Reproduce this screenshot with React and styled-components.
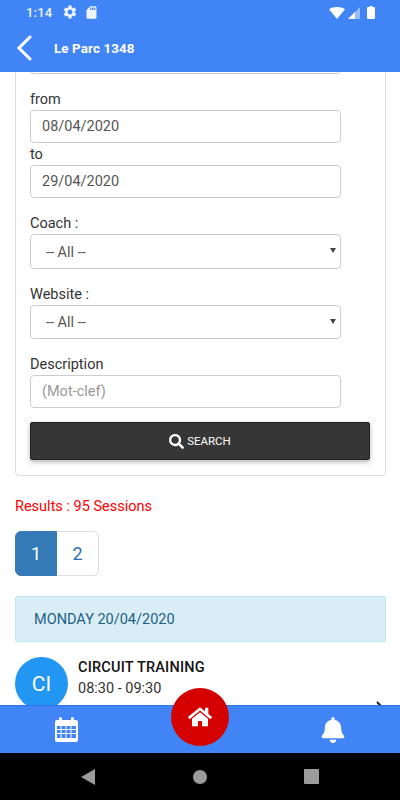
import React from 'react';
import styled, { createGlobalStyle } from 'styled-components';
import { FaBell, FaHome, FaSearch } from 'react-icons/fa';
import { MdSettings, MdSdCard } from 'react-icons/md';

const GlobalStyle = createGlobalStyle`
    html, body {
        margin: 0;
        padding: 0;
        background: #fff;
    }
    * {
        box-sizing: border-box;
    }
`;

const Screen = styled.div`
    position: relative;
    width: 400px;
    height: 800px;
    display: flex;
    flex-direction: column;
    overflow: hidden;
    font-family: Roboto, "Liberation Sans", sans-serif;
    color: #333;
`;

const Header = styled.header`
    flex: none;
    height: 72px;
    background: #4184f5;
    color: #fff;
`;

const StatusBar = styled.div`
    height: 24px;
    padding: 0 25px 0 26px;
    display: flex;
    align-items: center;
    font-size: 13px;
    font-weight: 500;
    color: #eef4fe;
`;

const StatusTime = styled.span`
    width: 36px;
    letter-spacing: 0.2px;
`;

const SdIcon = styled(MdSdCard)`
    margin-left: 6px;
`;

const StatusRight = styled.div`
    margin-left: auto;
    display: flex;
    align-items: flex-end;
    gap: 3px;
`;

const Battery = styled.svg`
    margin-left: 4px;
`;

const Toolbar = styled.div`
    height: 48px;
    display: flex;
    align-items: center;
    padding-left: 16px;
`;

const BackLink = styled.div`
    width: 38px;
    height: 26px;
`;

const Title = styled.div`
    font-size: 13.4px;
    font-weight: 700;
    letter-spacing: 0.1px;
`;

const Main = styled.main`
    flex: 1;
    min-height: 0;
    overflow: hidden;
    padding: 0 14px 0 15px;
`;

const FilterCard = styled.section`
    margin-top: -32px;
    height: 436px;
    padding: 0 14px;
    border: 1px solid #ddd;
    border-radius: 4px;
`;

const Field = styled.div`
    width: 311px;
    margin-bottom: ${(p) => p.$gap || 0}px;
`;

const Label = styled.label`
    display: block;
    height: ${(p) => p.$height || 21}px;
    line-height: ${(p) => p.$height || 21}px;
    font-size: 14.5px;
    color: #333;
`;

const TextInput = styled.input`
    display: block;
    width: 100%;
    height: 33px;
    padding: 0 11px;
    border: 1px solid #ccc;
    border-radius: 4px;
    background: #fff;
    outline: none;
    font: 400 14.5px Roboto, sans-serif;
    color: #555;
    &::placeholder {
        color: #999;
        opacity: 1;
    }
`;

const SelectBox = styled.div`
    position: relative;
    height: ${(p) => p.$height}px;
`;

const Select = styled.select`
    display: block;
    width: 100%;
    height: 100%;
    padding: 1px 15px 0;
    border: 1px solid #ccc;
    border-radius: 4px;
    background: #fff;
    outline: none;
    appearance: none;
    font: 400 14.5px Roboto, sans-serif;
    color: #555;
`;

const Caret = styled.span`
    position: absolute;
    right: 5px;
    top: 14px;
    width: 0;
    height: 0;
    border-left: 3px solid transparent;
    border-right: 3px solid transparent;
    border-top: 5px solid #444;
`;

const SearchButton = styled.button`
    width: 340px;
    height: 38px;
    margin-top: 14px;
    padding-bottom: 1px;
    display: flex;
    align-items: center;
    justify-content: center;
    gap: 3px;
    border: 1px solid #222;
    border-radius: 2px;
    background: #363636;
    box-shadow: 0 2px 5px rgba(0, 0, 0, 0.3);
    color: #fff;
    font: 400 11.5px Roboto, sans-serif;
    text-transform: uppercase;
`;

const Results = styled.p`
    margin: 21px 0 0;
    height: 20px;
    line-height: 20px;
    font-size: 14.5px;
    color: #f00;
`;

const Pagination = styled.div`
    display: flex;
    margin-top: 14px;
`;

const PageLink = styled.span`
    width: 42px;
    height: 45px;
    display: flex;
    align-items: center;
    justify-content: center;
    font-size: 18px;
    border: 1px solid ${(p) => (p.$active ? '#337ab7' : '#ddd')};
    border-left-width: ${(p) => (p.$active ? 1 : 0)}px;
    border-radius: ${(p) => (p.$active ? '6px 0 0 6px' : '0 6px 6px 0')};
    background: ${(p) => (p.$active ? '#337ab7' : '#fff')};
    color: ${(p) => (p.$active ? '#fff' : '#2a6db3')};
`;

const DayBanner = styled.div`
    height: 46px;
    margin-top: 20px;
    padding: 0 18px;
    display: flex;
    align-items: center;
    border: 1px solid #bce8f1;
    border-radius: 2px;
    background: #d9edf7;
    color: #1f5f85;
    font-size: 14.5px;
`;

const Session = styled.div`
    position: relative;
    display: flex;
    gap: 10px;
    margin-top: 15px;
`;

const Avatar = styled.div`
    flex: none;
    width: 53px;
    height: 53px;
    border-radius: 50%;
    background: #2196f3;
    color: #fff;
    display: flex;
    align-items: center;
    justify-content: center;
    font-size: 21px;
`;

const SessionBody = styled.div`
    flex: 1;
    padding-top: 1px;
`;

const SessionTitle = styled.div`
    height: 20px;
    line-height: 20px;
    font-size: 14.5px;
    font-weight: 500;
    letter-spacing: 0.2px;
    color: #111;
`;

const SessionTime = styled.div`
    height: 22px;
    line-height: 22px;
    font-size: 14.5px;
    color: #333;
`;

const Chevron = styled.svg`
    position: absolute;
    right: 2px;
    top: 44px;
`;

const TabBar = styled.nav`
    flex: none;
    height: 48px;
    position: relative;
    display: flex;
    justify-content: space-between;
    align-items: center;
    padding: 0 54px 0 55px;
    background: #4184f5;
    border-top: 1px solid #2b73ee;
    color: #fff;
`;

const HomeButton = styled.div`
    position: absolute;
    left: 171px;
    top: -18px;
    width: 58px;
    height: 58px;
    border-radius: 50%;
    background: #d50000;
    display: flex;
    align-items: center;
    justify-content: center;
    color: #fff;
`;

const NavBar = styled.div`
    flex: none;
    height: 47px;
    background: #000;
    display: flex;
    align-items: center;
    gap: 97px;
    padding-left: 81px;
`;

const CalendarIcon = () => (
    <svg width="23" height="25" viewBox="0 0 23 25">
        <path
            fill="#fff"
            fillRule="evenodd"
            d="M2 3h2V1.500a1.500 1.500 0 0 1 3 0V3h9V1.500a1.500 1.500 0 0 1 3 0V3h2a2 2 0 0 1 2 2v18a2 2 0 0 1-2 2H2a2 2 0 0 1-2-2V5a2 2 0 0 1 2-2zM2 9v3h3.500V9zM6.500 9v3h4V9zM11.500 9v3h4V9zM16.500 9v3H21V9zM2 13v3h3.500v-3zM6.500 13v3h4v-3zM11.500 13v3h4v-3zM16.500 13v3H21v-3zM2 17v3.500a.5.5 0 0 0 .5.5h3v-4zM6.500 17v4h4v-4zM11.500 17v4h4v-4zM16.500 17v4h4a.5.5 0 0 0 .5-.5V17z"
        />
    </svg>
);

const App = () => {
    return (
        <>
            <GlobalStyle />
            <Screen>
                <Header>
                    <StatusBar>
                        <StatusTime>1:14</StatusTime>
                        <MdSettings size={16} />
                        <SdIcon size={15} />
                        <StatusRight>
                            <svg width="16" height="12" viewBox="0 0 16 12">
                                <path fill="#fff" d="M0 2.200C2.200.8 5 0 8 0s5.800.8 8 2.200L8 12z" />
                            </svg>
                            <svg width="12" height="12" viewBox="0 0 12 12">
                                <path fill="#fff" fillOpacity="0.45" d="M12 0v12H0z" />
                                <path fill="#fff" d="M7 5v7H0z" />
                            </svg>
                            <Battery width="8" height="13" viewBox="0 0 8 13">
                                <path fill="#fff" d="M2.500 0h3v1H7a1 1 0 0 1 1 1v10a1 1 0 0 1-1 1H1a1 1 0 0 1-1-1V2a1 1 0 0 1 1-1h1.500z" />
                            </Battery>
                        </StatusRight>
                    </StatusBar>
                    <Toolbar>
                        <BackLink>
                            <svg width="16" height="26" viewBox="0 0 16 26">
                                <path d="M14 2 3 13l11 11" fill="none" stroke="#fff" strokeWidth="3" strokeLinecap="round" />
                            </svg>
                        </BackLink>
                        <Title>Le Parc 1348</Title>
                    </Toolbar>
                </Header>

                <Main>
                    <FilterCard>
                        <Field $gap={16}>
                            <TextInput readOnly />
                        </Field>
                        <Field $gap={1}>
                            <Label $height={20}>from</Label>
                            <TextInput readOnly value="08/04/2020" />
                        </Field>
                        <Field $gap={15}>
                            <Label>to</Label>
                            <TextInput readOnly value="29/04/2020" />
                        </Field>
                        <Field $gap={15}>
                            <Label>Coach :</Label>
                            <SelectBox $height={35}>
                                <Select defaultValue="all">
                                    <option value="all">-- All --</option>
                                </Select>
                                <Caret />
                            </SelectBox>
                        </Field>
                        <Field $gap={15}>
                            <Label>Website :</Label>
                            <SelectBox $height={34}>
                                <Select defaultValue="all">
                                    <option value="all">-- All --</option>
                                </Select>
                                <Caret />
                            </SelectBox>
                        </Field>
                        <Field>
                            <Label>Description</Label>
                            <TextInput readOnly placeholder="(Mot-clef)" />
                        </Field>
                        <SearchButton>
                            <FaSearch size={15} />
                            Search
                        </SearchButton>
                    </FilterCard>

                    <Results>Results : 95 Sessions</Results>

                    <Pagination>
                        <PageLink $active>1</PageLink>
                        <PageLink>2</PageLink>
                    </Pagination>

                    <DayBanner>MONDAY 20/04/2020</DayBanner>

                    <Session>
                        <Avatar>CI</Avatar>
                        <SessionBody>
                            <SessionTitle>CIRCUIT TRAINING</SessionTitle>
                            <SessionTime>08:30 - 09:30</SessionTime>
                        </SessionBody>
                        <Chevron width="8" height="14" viewBox="0 0 8 14">
                            <path d="M1 1l6 6-6 6" fill="none" stroke="#222" strokeWidth="2" />
                        </Chevron>
                    </Session>
                </Main>

                <TabBar>
                    <CalendarIcon />
                    <HomeButton>
                        <FaHome size={24} />
                    </HomeButton>
                    <FaBell size={26} />
                </TabBar>

                <NavBar>
                    <svg width="15" height="16" viewBox="0 0 15 16">
                        <path fill="#9b9b9b" d="M14 0v16L0 8z" />
                    </svg>
                    <svg width="14" height="14" viewBox="0 0 14 14">
                        <circle cx="7" cy="7" r="7" fill="#9b9b9b" />
                    </svg>
                    <svg width="15" height="15" viewBox="0 0 15 15">
                        <rect width="15" height="15" rx="1" fill="#9b9b9b" />
                    </svg>
                </NavBar>
            </Screen>
        </>
    );
};

export default App;
